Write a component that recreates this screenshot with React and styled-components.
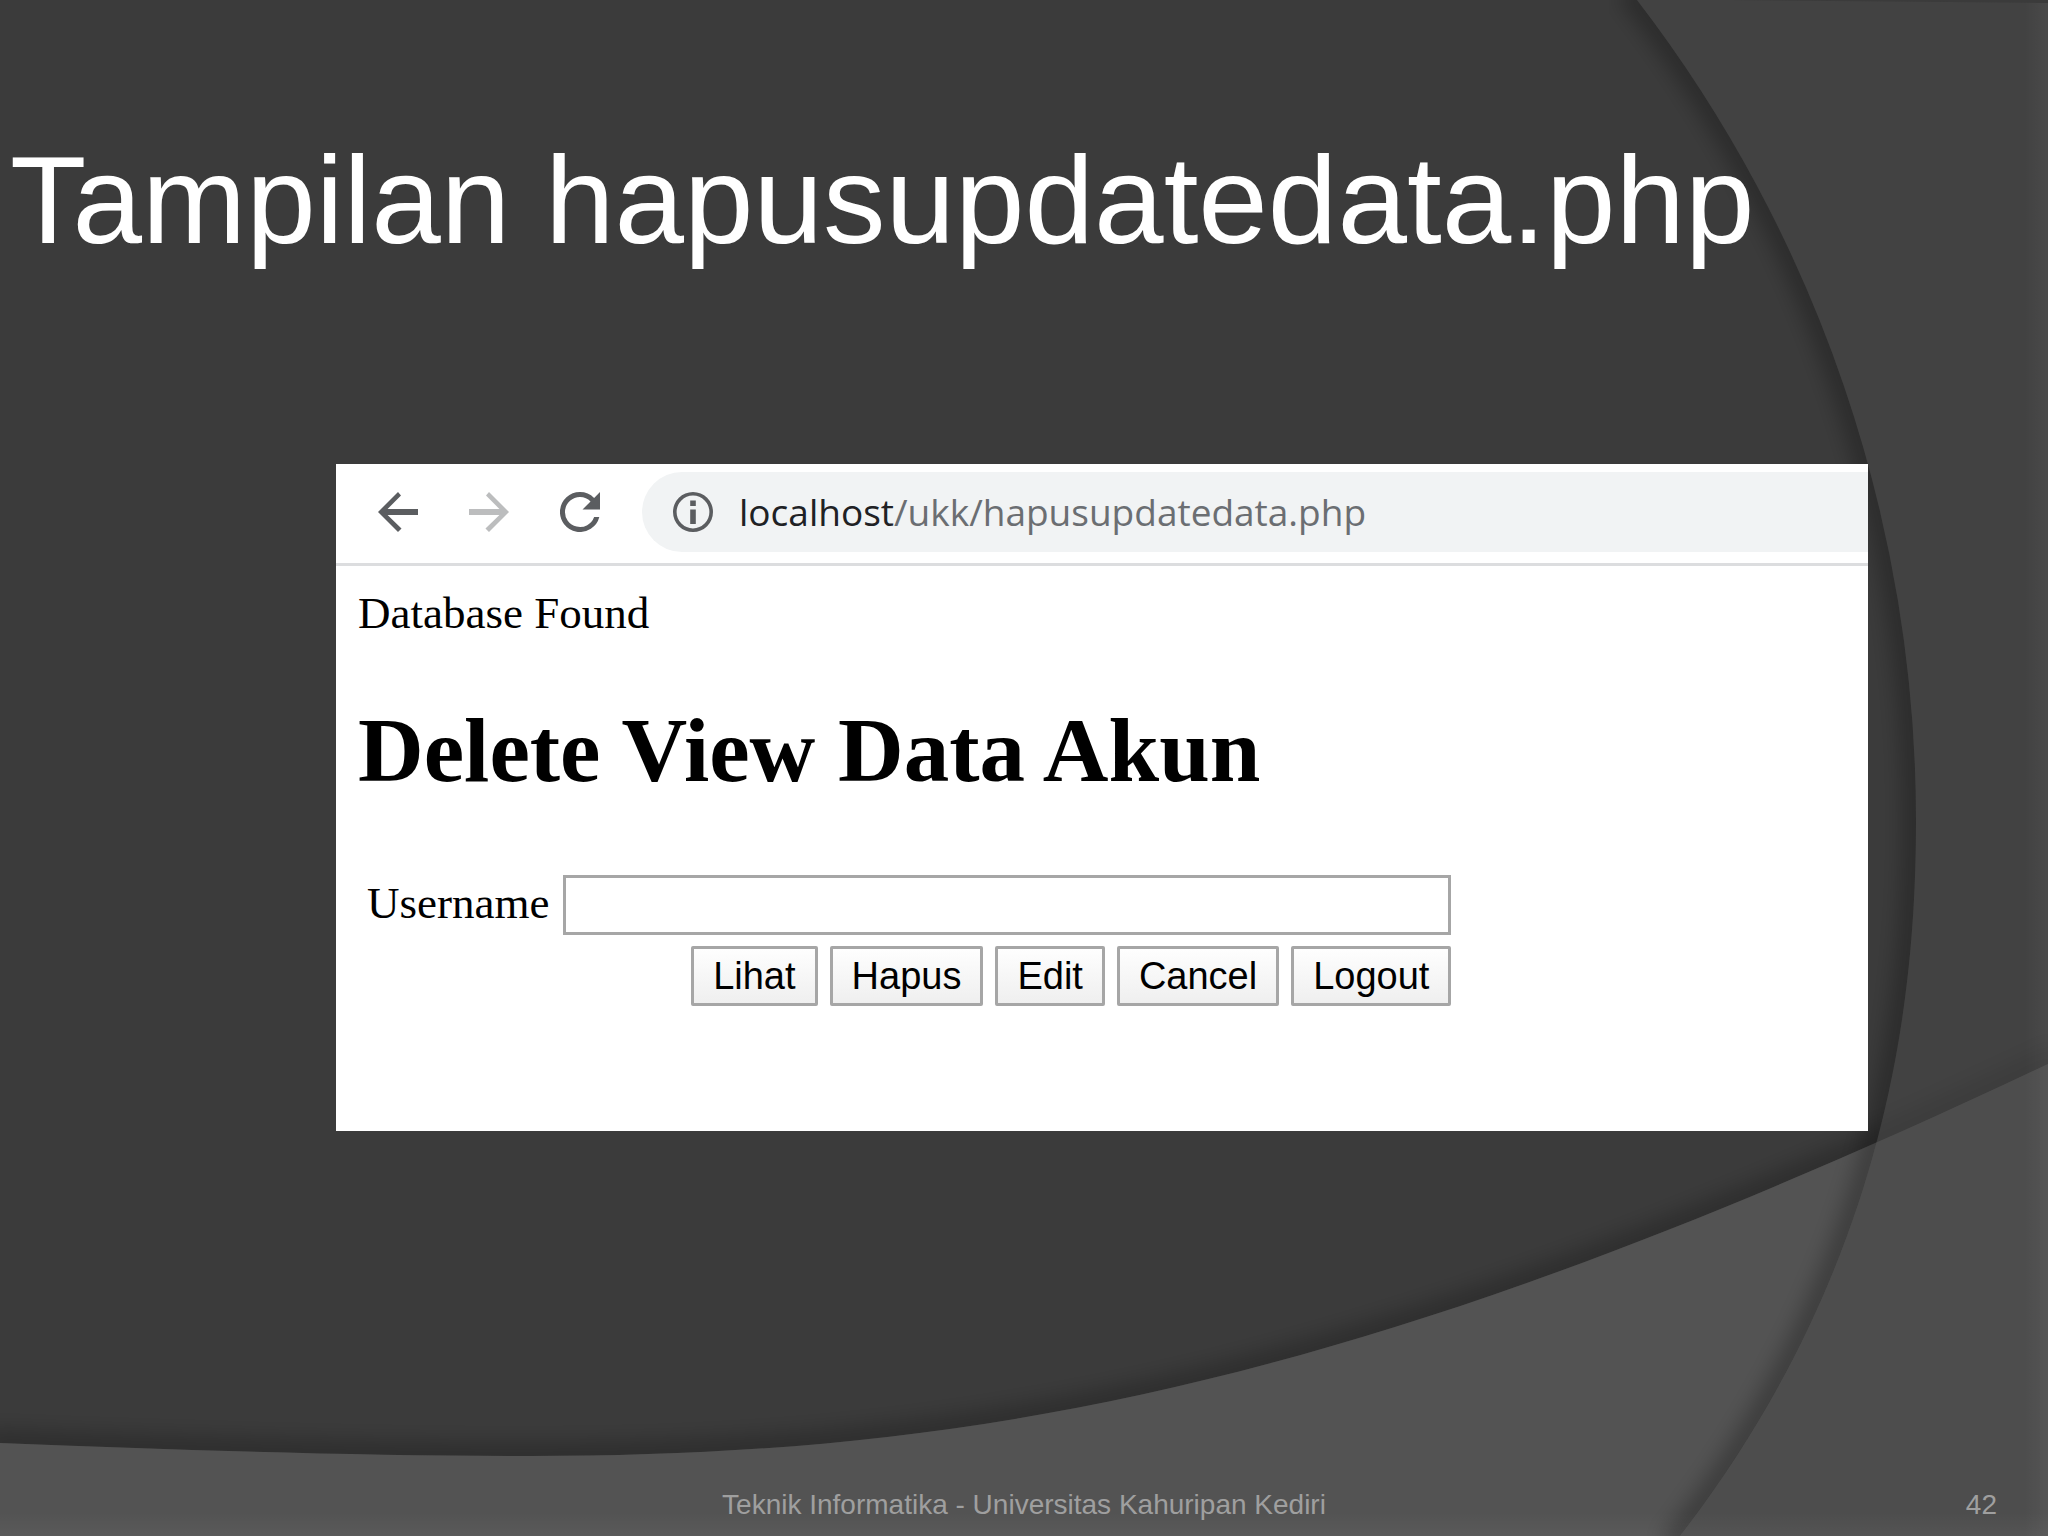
import React, { useState } from "react";
import styled, { createGlobalStyle } from "styled-components";

const actions = ["Lihat", "Hapus", "Edit", "Cancel", "Logout"];

const CIRCLE_EDGE =
  "M1637 0 A1345 1345 0 0 1 1916 820 C1916 990 1892 1262 1680 1536";
const WAVE_EDGE =
  "M0 1443 C180 1450 360 1456 530 1456 C990 1456 1380 1380 2048 1064";

const Background = () => (
  <Backdrop viewBox="0 0 2048 1536" preserveAspectRatio="none" aria-hidden="true">
    <defs>
      <filter id="soft" x="-10%" y="-10%" width="120%" height="120%">
        <feGaussianBlur stdDeviation="10" />
      </filter>
      <clipPath id="leftOfCircle">
        <path d={`${CIRCLE_EDGE} H0 V0 Z`} />
      </clipPath>
      <clipPath id="aboveWave">
        <path d={`${WAVE_EDGE} V0 H0 Z`} />
      </clipPath>
      <linearGradient id="rightGlow">
        <stop offset="0" stopColor="#fff" stopOpacity="0" />
        <stop offset="1" stopColor="#fff" stopOpacity="0.04" />
      </linearGradient>
      <linearGradient id="bottomGlow" x1="0" y1="0" x2="0" y2="1">
        <stop offset="0" stopColor="#fff" stopOpacity="0" />
        <stop offset="1" stopColor="#fff" stopOpacity="0.04" />
      </linearGradient>
    </defs>
    <rect width="2048" height="1536" fill="#3b3b3b" />
    <g clipPath="url(#aboveWave)">
      <path
        d={WAVE_EDGE}
        fill="none"
        stroke="#000"
        strokeOpacity="0.22"
        strokeWidth="28"
        strokeLinecap="square"
        filter="url(#soft)"
      />
    </g>
    <path d={`${WAVE_EDGE} V1536 H0 Z`} fill="#535353" />
    <g clipPath="url(#leftOfCircle)">
      <path
        d={CIRCLE_EDGE}
        fill="none"
        stroke="#000"
        strokeOpacity="0.26"
        strokeWidth="28"
        strokeLinecap="square"
        filter="url(#soft)"
      />
    </g>
    <path
      d={`${CIRCLE_EDGE} H2048 V3 L1730 0 Z`}
      fill="#494949"
      fillOpacity="0.52"
    />
    <rect x="2024" y="3" width="24" height="1533" fill="url(#rightGlow)" />
    <rect y="1512" width="2048" height="24" fill="url(#bottomGlow)" />
  </Backdrop>
);

const BackIcon = () => (
  <Icon viewBox="4 4 16 16">
    <path d="M20 10.8H7.83L13.2 5.4 12 4l-8 8 8 8 1.41-1.41L7.83 13.2H20v-2.4z" />
  </Icon>
);

const ForwardIcon = () => (
  <Icon viewBox="4 4 16 16">
    <path d="M12 4l-1.2 1.4 5.37 5.4H4v2.4h12.17l-5.58 5.39L12 20l8-8z" />
  </Icon>
);

const ReloadIcon = () => (
  <Icon viewBox="4 4 16 16">
    <path d="M17.65 6.35A7.96 7.96 0 0 0 12 4a8 8 0 1 0 7.73 10h-2.08A6 6 0 1 1 12 6c1.66 0 3.14.69 4.22 1.78L13 11h7V4z" />
  </Icon>
);

const InfoIcon = () => (
  <Icon viewBox="2 2 20 20">
    <path d="M10.6 10.8h2.8V18h-2.8zm0-4.6h2.8V9h-2.8zM12 2a10 10 0 1 0 0 20 10 10 0 0 0 0-20zm0 18.2a8.2 8.2 0 1 1 0-16.4 8.2 8.2 0 0 1 0 16.4z" />
  </Icon>
);

const App = () => {
  const [username, setUsername] = useState("");

  return (
    <Slide>
      <GlobalStyle />
      <Background />
      <Title>Tampilan hapusupdatedata.php</Title>
      <BrowserWindow>
        <Toolbar>
          <NavButtons>
            <NavButton type="button" aria-label="Back">
              <BackIcon />
            </NavButton>
            <NavButton type="button" aria-label="Forward" $faded>
              <ForwardIcon />
            </NavButton>
            <NavButton type="button" aria-label="Reload">
              <ReloadIcon />
            </NavButton>
          </NavButtons>
          <AddressBar>
            <InfoIcon />
            <Url>
              <Host>localhost</Host>/ukk/hapusupdatedata.php
            </Url>
          </AddressBar>
        </Toolbar>
        <PageBody>
          <Message>Database Found</Message>
          <Heading>Delete View Data Akun</Heading>
          <Form onSubmit={(event) => event.preventDefault()}>
            <Label htmlFor="username">Username</Label>
            <TextInput
              id="username"
              type="text"
              value={username}
              onChange={(event) => setUsername(event.target.value)}
            />
            <ButtonRow>
              {actions.map((action) => (
                <Button key={action} type="button">
                  {action}
                </Button>
              ))}
            </ButtonRow>
          </Form>
        </PageBody>
      </BrowserWindow>
      <Footer>
        <FooterText>Teknik Informatika - Universitas Kahuripan Kediri</FooterText>
        <PageNumber>42</PageNumber>
      </Footer>
    </Slide>
  );
};

const GlobalStyle = createGlobalStyle`
  * {
    box-sizing: border-box;
  }
  body {
    margin: 0;
    background: #3b3b3b;
  }
`;

const Slide = styled.div`
  position: relative;
  isolation: isolate;
  display: flex;
  flex-direction: column;
  min-height: 100vh;
  overflow: hidden;
`;

const Backdrop = styled.svg`
  position: absolute;
  inset: 0;
  z-index: -1;
  width: 100%;
  height: 100%;
`;

const Title = styled.h1`
  margin: 0;
  padding: 130px 10px 0;
  color: #fff;
  font-family: "Liberation Sans", Arial, sans-serif;
  font-size: 125px;
  font-weight: normal;
  line-height: 140px;
`;

const BrowserWindow = styled.main`
  margin: 194px 180px 0 336px;
  background: #fff;
`;

const Toolbar = styled.div`
  display: flex;
  align-items: center;
  gap: 42px;
  padding: 8px 0 11px 42px;
  border-bottom: 3px solid #dcdddf;
`;

const NavButtons = styled.div`
  display: flex;
  gap: 51px;
`;

const NavButton = styled.button`
  display: flex;
  padding: 0;
  border: 0;
  background: none;
  color: ${(props) => (props.$faded ? "#bcbdbe" : "#5b5d60")};
`;

const Icon = styled.svg`
  flex: none;
  width: 40px;
  height: 40px;
  fill: currentColor;
`;

const AddressBar = styled.div`
  display: flex;
  flex: 1;
  align-items: center;
  gap: 26px;
  height: 80px;
  padding-left: 31px;
  border-radius: 40px 0 0 40px;
  background: #f1f3f4;
  color: #5b5d60;
`;

const Url = styled.span`
  color: #6b6e72;
  font-family: "Open Sans", "Noto Sans", sans-serif;
  font-size: 37px;
  line-height: 52px;
`;

const Host = styled.span`
  color: #202124;
`;

const PageBody = styled.div`
  padding: 21px 22px 125px;
  color: #000;
  font-family: "Liberation Serif", "Times New Roman", serif;
  font-size: 45px;
  line-height: 52px;
`;

const Message = styled.p`
  margin: 0;
`;

const Heading = styled.h2`
  margin: 60px 0 72px;
  font-size: 91px;
  line-height: 104px;
`;

const Form = styled.form`
  display: grid;
  grid-template-columns: auto minmax(0, 888px);
  justify-content: start;
  align-items: baseline;
  gap: 11px 14px;
  padding-left: 9px;
`;

const Label = styled.label`
  white-space: nowrap;
`;

const TextInput = styled.input`
  width: 100%;
  height: 60px;
  padding: 3px;
  border: 3px solid #a6a6a6;
  background: #fff;
  font-family: "Liberation Sans", Arial, sans-serif;
  font-size: 38px;
`;

const ButtonRow = styled.div`
  display: flex;
  grid-column: 2;
  justify-content: flex-end;
  gap: 12px;
`;

const Button = styled.button`
  height: 60px;
  padding: 0 19px;
  border: 3px solid #a6a6a6;
  border-radius: 2px;
  background: linear-gradient(#fefefe, #efefef);
  color: #000;
  font-family: "Liberation Sans", Arial, sans-serif;
  font-size: 38px;
`;

const Footer = styled.footer`
  display: grid;
  grid-template-columns: 1fr auto 1fr;
  margin-top: auto;
  padding: 0 51px 15px;
  color: #9f9f9f;
  font-family: "Liberation Sans", Arial, sans-serif;
  font-size: 28px;
  line-height: 32px;
`;

const FooterText = styled.span`
  grid-column: 2;
`;

const PageNumber = styled.span`
  justify-self: end;
`;

export default App;
